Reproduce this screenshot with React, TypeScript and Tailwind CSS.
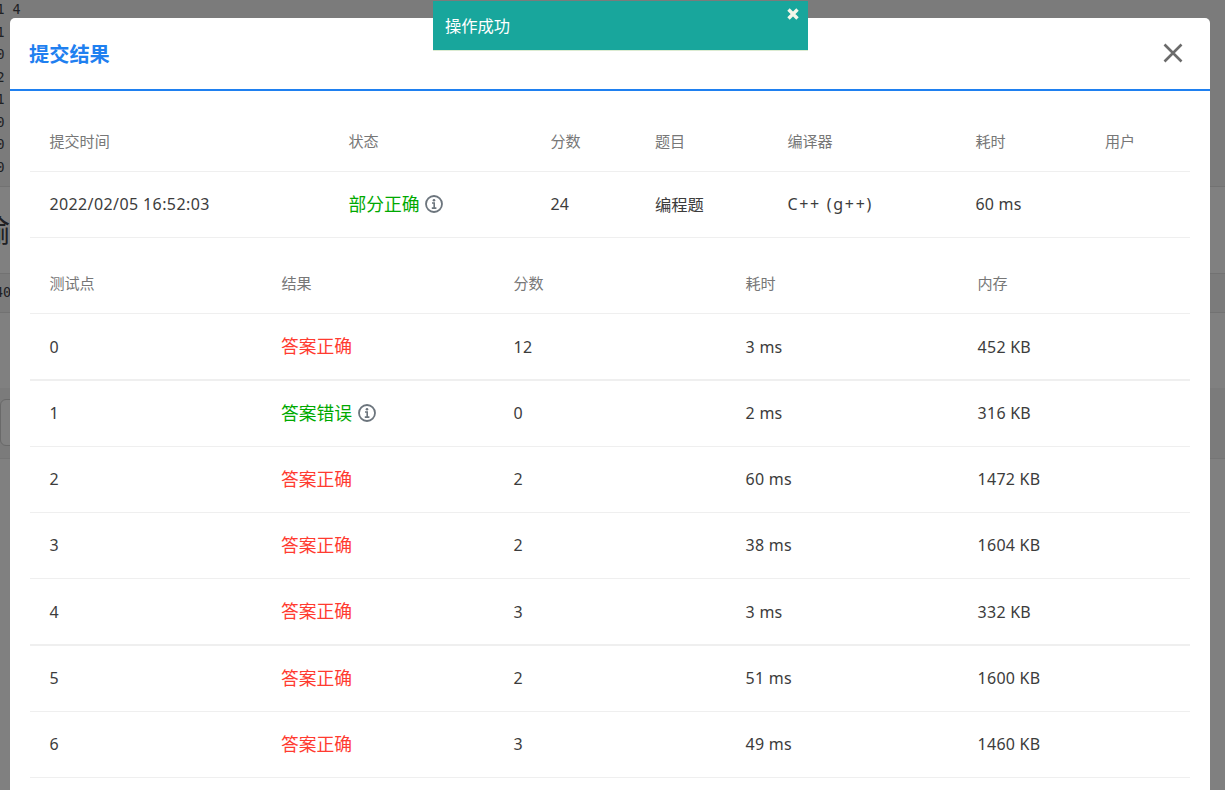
import { useState } from 'react';
import type { ReactNode } from 'react';

type TestPoint = {
  id: number;
  passed: boolean;
  score: number;
  time: string;
  memory: string;
  height: string;
};

const testPoints: TestPoint[] = [
  { id: 0, passed: true, score: 12, time: '3 ms', memory: '452 KB', height: 'h-[67px] border-b-2' },
  { id: 1, passed: false, score: 0, time: '2 ms', memory: '316 KB', height: 'h-[66px] border-b *:pb-px' },
  { id: 2, passed: true, score: 2, time: '60 ms', memory: '1472 KB', height: 'h-[66px] border-b *:pb-px' },
  { id: 3, passed: true, score: 2, time: '38 ms', memory: '1604 KB', height: 'h-[66px] border-b *:pb-px' },
  { id: 4, passed: true, score: 3, time: '3 ms', memory: '332 KB', height: 'h-[67px] border-b-2' },
  { id: 5, passed: true, score: 2, time: '51 ms', memory: '1600 KB', height: 'h-[66px] border-b *:pb-px' },
  { id: 6, passed: true, score: 3, time: '49 ms', memory: '1460 KB', height: 'h-[66px] border-b *:pb-px' },
];

const sampleLines = ['1 4', '1', '0', '2', '1', '0', '0', '0'];

const summaryGrid = 'grid grid-cols-[299px_202px_104.6px_132.4px_188px_129.6px_1fr] pl-[19.4px]';
const pointGrid = 'grid grid-cols-5';
const cell = 'pl-[19.4px]';
const valueCell = 'pl-[19.6px] tracking-[0.25px]';

function InfoIcon() {
  return (
    <svg className="-mt-px ml-[5.5px] size-[18px] shrink-0" viewBox="0 0 18 18" fill="none">
      <circle cx="9" cy="9" r="8" stroke="#6c757d" strokeWidth="1.8" />
      <circle cx="9" cy="5.2" r="1.3" fill="#6c757d" />
      <path d="M7 8h2.2v5M6.8 13.1h4.6" stroke="#6c757d" strokeWidth="1.6" />
    </svg>
  );
}

function Status({ good, info, children }: { good: boolean; info?: boolean; children: ReactNode }) {
  return (
    <span className={`flex items-center text-[17.8px] ${good ? 'text-[#ff3b30]' : 'text-[#00a900]'}`}>
      {children}
      {info && <InfoIcon />}
    </span>
  );
}

// Problem page that stays visible around the dialog
function PageBehind() {
  return (
    <div className="absolute inset-0 flex flex-col bg-[#808080] text-[#202124]">
      <div className="h-[187px] shrink-0 border-b border-[#727272] bg-[#7b7b7b] font-['DejaVu_Sans_Mono',monospace] text-[13.4px] leading-[22.5px]">
        {sampleLines.map((line, i) => (
          <div key={i} className="-ml-[3.5px] -mt-px mb-px whitespace-pre">{line}</div>
        ))}
      </div>
      <div className="h-[86px] shrink-0 pt-[25px]">
        <div className="-ml-[21px] text-[31px] leading-9">输</div>
      </div>
      <div className="h-10 shrink-0 border-y border-[#727272] bg-[#7b7b7b] font-['DejaVu_Sans_Mono',monospace] text-[13.4px] leading-[37px]">
        <div className="-ml-[5px]">40</div>
      </div>
      <div className="h-[75px] shrink-0" />
      <div className="h-[71px] shrink-0 border-b border-[#757575] bg-[#7b7b7b] pt-[11px]">
        <div className="h-[47px] w-40 rounded-md border border-[#696969] bg-[#808080]" />
      </div>
    </div>
  );
}

export default function App() {
  const [toastOpen, setToastOpen] = useState(true);

  return (
    <div className="relative h-[790px] w-[1225px] overflow-hidden font-['Noto_Sans','Noto_Sans_CJK_SC',sans-serif] text-[16px] text-[#3c3c3c]">
      <PageBehind />

      <div className="relative mt-[18px] mr-[15px] ml-[10px] h-[900px] rounded-t-[5px] bg-white">
        <header className="flex h-[73px] items-center justify-between border-b-2 border-[#1f80f0] pr-[27px] pl-[19px]">
          <h1 className="pt-[2px] text-[20.2px] font-bold text-[#1f80f0]">提交结果</h1>
          <button aria-label="关闭" className="-mt-[2px]">
            <svg className="size-5" viewBox="0 0 20 20">
              <path d="M1.5 1.5 18.5 18.5M18.5 1.5 1.5 18.5" stroke="#6b6b6b" strokeWidth="2.6" />
            </svg>
          </button>
        </header>

        <div className="px-5 pt-5">
          <div className={`${summaryGrid} h-[61px] items-center border-b border-[#efefef] text-[15.1px] text-[#777]`}>
            <span>提交时间</span>
            <span>状态</span>
            <span>分数</span>
            <span>题目</span>
            <span>编译器</span>
            <span>耗时</span>
            <span>用户</span>
          </div>
          <div className={`${summaryGrid} h-[66px] items-center border-b border-[#efefef]`}>
            <span className="pb-[2px] tracking-[0.4px]">2022/02/05 16:52:03</span>
            <Status good={false} info>部分正确</Status>
            <span className="pb-[2px] tracking-[0.25px]">24</span>
            <span className="pt-px text-[16.3px]">编程题</span>
            <span className="pb-[2px] tracking-[1.7px]">C++ (g++)</span>
            <span className="pb-[2px] tracking-[0.25px]">60 ms</span>
          </div>

          <div className={`${pointGrid} mt-[15px] h-[61px] items-center border-b border-[#efefef] text-[15.1px] text-[#777]`}>
            <span className={cell}>测试点</span>
            <span className={cell}>结果</span>
            <span className={cell}>分数</span>
            <span className={cell}>耗时</span>
            <span className={cell}>内存</span>
          </div>
          {testPoints.map((point) => (
            <div key={point.id} className={`${pointGrid} ${point.height} items-center border-[#efefef]`}>
              <span className={valueCell}>{point.id}</span>
              <div className="pl-[19px]">
                <Status good={point.passed} info={!point.passed}>
                  {point.passed ? '答案正确' : '答案错误'}
                </Status>
              </div>
              <span className={valueCell}>{point.score}</span>
              <span className={valueCell}>{point.time}</span>
              <span className={valueCell}>{point.memory}</span>
            </div>
          ))}
        </div>
      </div>

      {toastOpen && (
        <div className="absolute top-px left-[433px] flex h-[49px] w-[375px] items-center justify-between bg-[#18a69c] pr-[9px] pl-3 text-[16.3px] text-white shadow-[0_1px_0_#dcebd2]">
          <span className="pt-[2px]">操作成功</span>
          <button aria-label="关闭提示" className="-mt-[23px]" onClick={() => setToastOpen(false)}>
            <svg className="size-3" viewBox="0 0 12 12">
              <path d="M1.5 1.5 10.5 10.5M10.5 1.5 1.5 10.5" stroke="#f3f6e9" strokeWidth="3.4" />
            </svg>
          </button>
        </div>
      )}
    </div>
  );
}
